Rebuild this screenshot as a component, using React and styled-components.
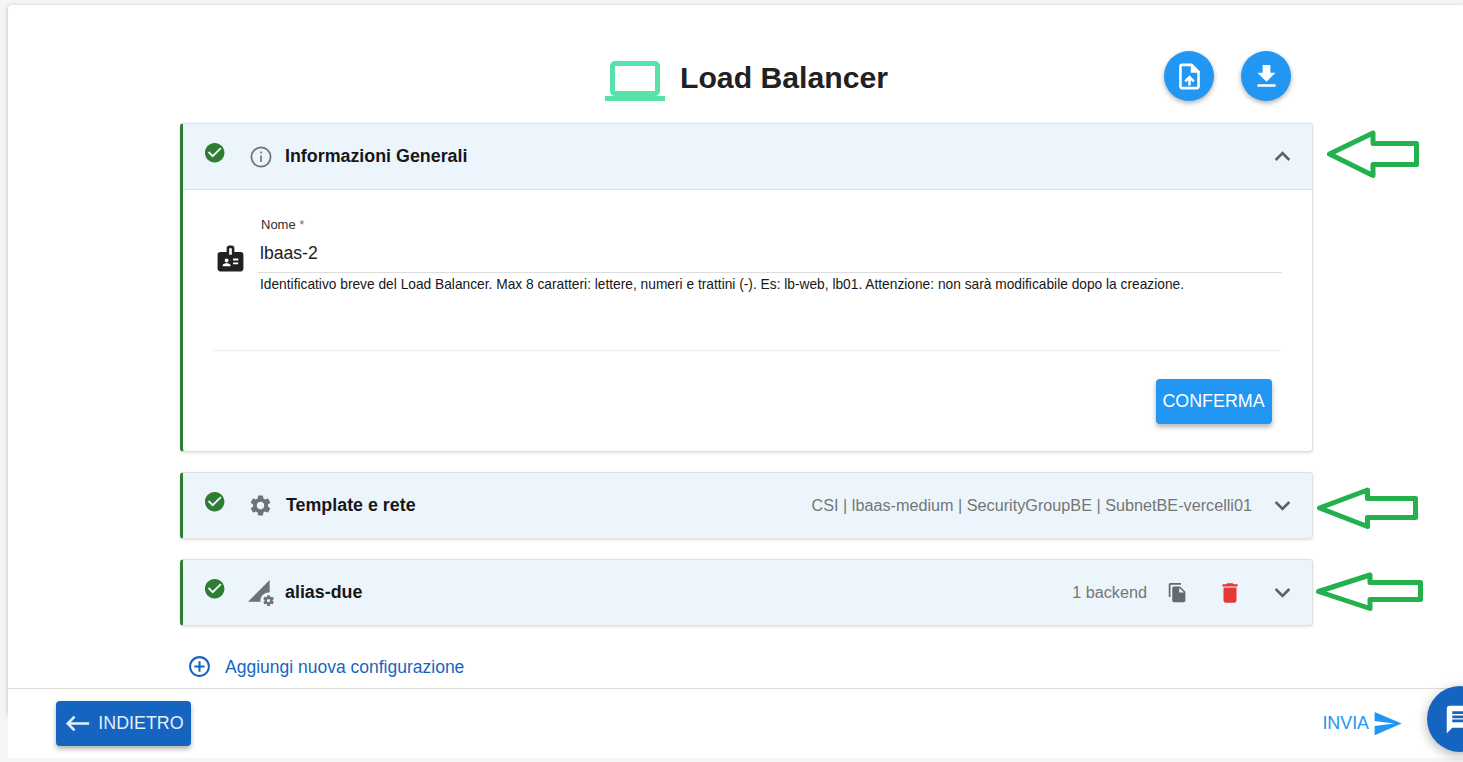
import React from 'react';
import styled, { createGlobalStyle, css } from 'styled-components';
import {
  MdLaptop,
  MdOutlineUploadFile,
  MdFileDownload,
  MdCheckCircle,
  MdExpandLess,
  MdExpandMore,
  MdBadge,
  MdSettings,
  MdPermDataSetting,
  MdFileCopy,
  MdDelete,
  MdAddCircleOutline,
  MdKeyboardBackspace,
  MdSend,
  MdMessage,
} from 'react-icons/md';

const GlobalStyle = createGlobalStyle`
  * {
    box-sizing: border-box;
  }

  body {
    margin: 0;
    background: #f5f5f5;
    color: #212121;
    font-family: "Liberation Sans", Arial, sans-serif;
    overflow: hidden;
  }

  svg {
    display: block;
    flex-shrink: 0;
  }
`;

const Shell = styled.div`
  height: 762px;
  padding: 5px 0 4px 8px;
  display: flex;
  flex-direction: column;
  overflow: hidden;
`;

const Page = styled.main`
  height: 710px;
  flex-shrink: 0;
  margin-bottom: -27px;
  padding: 46px 150px 0 172px;
  background: #fff;
  border-radius: 4px 0 0 4px;
  box-shadow: 0 1px 4px rgba(0, 0, 0, 0.25);
`;

const Header = styled.header`
  height: 72px;
  display: grid;
  grid-template-columns: 1fr auto 1fr;
  align-items: start;
`;

const Title = styled.div`
  grid-column: 2;
  display: flex;
  gap: 15px;
  color: #57e2a9;

  h1 {
    margin: 0;
    color: #212121;
    font-size: 30.2px;
    line-height: 54px;
    white-space: nowrap;
  }
`;

const HeaderActions = styled.div`
  display: flex;
  justify-content: flex-end;
  gap: 27px;
  padding-right: 22px;
`;

const RoundButton = styled.button`
  width: 50px;
  height: 50px;
  padding: 0;
  border: 0;
  border-radius: 50%;
  display: grid;
  place-items: center;
  background: #2196f3;
  color: #fff;
  box-shadow: 0 2px 5px rgba(0, 0, 0, 0.32);
`;

const Panels = styled.div`
  display: flex;
  flex-direction: column;
  gap: 20px;
`;

const Panel = styled.section`
  border: 1px solid #e0e0e0;
  border-left: 3px solid #2e7d32;
  border-radius: 4px;
  background: #fff;
  box-shadow: 0 1px 3px rgba(0, 0, 0, 0.12);
`;

const PanelHead = styled.div`
  height: ${({ $open }) => ($open ? 66 : 65)}px;
  padding: 0 14px 0 20px;
  display: flex;
  align-items: center;
  background: #edf5fc;
  border-radius: 0 3px 3px 0;
  ${({ $open }) => $open && css`
    border-bottom: 1px solid #e0e0e0;
    border-radius: 0 3px 0 0;
  `}
`;

const Status = styled.span`
  width: 46px;
  padding-bottom: 8px;
  color: #2e7d32;
`;

const PanelIcon = styled.span`
  width: 31px;
  margin-right: 5px;
  margin-left: -4px;
  display: flex;
  justify-content: center;
  color: #6f7276;
`;

const PanelTitle = styled.h2`
  margin: 0 auto 0 ${({ $shift }) => $shift || 0}px;
  padding: 0 0 2px 4px;
  color: #171717;
  font-size: 17.85px;
  line-height: 24px;
`;

const Summary = styled.span`
  color: #757575;
  font-size: 16.22px;
  white-space: nowrap;
`;

const RowAction = styled.span`
  margin-left: ${({ $gap }) => $gap}px;
  color: ${({ $color }) => $color || '#66696d'};
`;

const PanelBody = styled.div`
  height: 261px;
  padding: 26px 31px 0 30px;
`;

const Field = styled.label`
  height: 135px;
  display: flex;
  gap: 12px;
  border-bottom: 1px solid #eee;

  > svg {
    margin: 27px 0 0 2px;
  }
`;

const FieldMain = styled.span`
  flex: 1;
  margin-right: -1px;
  display: flex;
  flex-direction: column;
`;

const Label = styled.span`
  padding-left: 3px;
  font-size: 13px;
  line-height: 17px;
  color: #303030;

  i {
    color: #777;
    font-style: normal;
  }
`;

const Input = styled.input`
  height: 40px;
  padding: 1px 2px 0;
  border: 0;
  border-bottom: 1px solid #ddd;
  background: none;
  color: #212121;
  font-family: inherit;
  font-size: 17.6px;
  outline: 0;
`;

const Hint = styled.span`
  padding: 3px 2px 0;
  color: #171717;
  font-size: 13.75px;
  line-height: 18px;
  white-space: nowrap;
`;

const PanelActions = styled.div`
  display: flex;
  justify-content: flex-end;
  padding: 28px 9px 0 0;
`;

const Button = styled.button`
  width: ${({ $width }) => $width}px;
  height: 45px;
  padding: 0 1px 0 0;
  border: 0;
  border-radius: 4px;
  display: flex;
  align-items: center;
  justify-content: center;
  gap: 5px;
  background: ${({ $dark }) => ($dark ? '#1565c0' : '#2196f3')};
  color: ${({ $dark }) => ($dark ? '#e3effa' : '#fff')};
  box-shadow: 0 3px 5px rgba(0, 0, 0, 0.3);
  font-family: inherit;
  font-size: 17.85px;
`;

const AddLink = styled.a`
  margin: 27px 0 0 7px;
  display: flex;
  align-items: center;
  gap: 13px;
  color: #1565c0;
  font-size: 17.5px;
  line-height: 28px;

  svg {
    margin-top: -1px;
  }
`;

const Footer = styled.footer`
  position: relative;
  height: 70px;
  flex-shrink: 0;
  padding: 12px 60px 12px 48px;
  display: flex;
  align-items: flex-start;
  justify-content: space-between;
  border-top: 1px solid #ddd;
  background: #fff;
`;

const SendLink = styled.a`
  height: 45px;
  display: flex;
  align-items: center;
  gap: 3px;
  color: #2196f3;
  font-size: 17.85px;
`;

const ChatButton = styled.button`
  position: fixed;
  left: 1427px;
  top: 686px;
  width: 66px;
  height: 66px;
  padding: 0;
  border: 0;
  border-radius: 50%;
  display: grid;
  place-items: center;
  background: #1565c0;
  color: #fff;
  box-shadow: 0 3px 12px rgba(0, 0, 0, 0.3);
`;

const Annotations = styled.svg`
  position: absolute;
  left: 0;
  top: 0;
  fill: #fff;
  stroke: #22b14c;
  stroke-width: 5;
  stroke-linejoin: round;
  pointer-events: none;
`;

const ARROWS = [
  '1329.5,154 1373,133 1373,143.5 1416.5,143.5 1416.5,164.5 1373,164.5 1373,175.5',
  '1319.5,508 1367.5,490 1367.5,498.5 1415.5,498.5 1415.5,517.5 1367.5,517.5 1367.5,526.5',
  '1318.5,591.5 1370,575 1370,582.5 1420.5,582.5 1420.5,599.5 1370,599.5 1370,608.5',
];

const InfoIcon = () => (
  <svg width="22" height="22" viewBox="0 0 22 22" fill="none" stroke="currentColor">
    <circle cx="11" cy="11" r="9.6" strokeWidth="1.7" />
    <path d="M11 9.5v6.5M11 5.5v2" strokeWidth="1.6" />
  </svg>
);

const PanelHeader = ({ icon, title, shift, open, children }) => (
  <PanelHead $open={open}>
    <Status><MdCheckCircle size={23.4} /></Status>
    <PanelIcon>{icon}</PanelIcon>
    <PanelTitle $shift={shift}>{title}</PanelTitle>
    {children}
    <RowAction $gap={children ? 15 : 0} $color="#616161">
      {open ? <MdExpandLess size={31} /> : <MdExpandMore size={31} />}
    </RowAction>
  </PanelHead>
);

const App = () => (
  <>
    <GlobalStyle />
    <Shell>
      <Page>
        <Header>
          <Title>
            <MdLaptop size={60} />
            <h1>Load Balancer</h1>
          </Title>
          <HeaderActions>
            <RoundButton aria-label="Carica"><MdOutlineUploadFile size={31} /></RoundButton>
            <RoundButton aria-label="Scarica"><MdFileDownload size={31} /></RoundButton>
          </HeaderActions>
        </Header>
        <Panels>
          <Panel>
            <PanelHeader open title="Informazioni Generali" icon={<InfoIcon />} />
            <PanelBody>
              <Field>
                <MdBadge size={31} />
                <FieldMain>
                  <Label>Nome <i>*</i></Label>
                  <Input defaultValue="lbaas-2" />
                  <Hint>
                    Identificativo breve del Load Balancer. Max 8 caratteri: lettere, numeri e trattini (-). Es: lb-web, lb01. Attenzione: non sarà modificabile dopo la creazione.
                  </Hint>
                </FieldMain>
              </Field>
              <PanelActions>
                <Button $width={116}>CONFERMA</Button>
              </PanelActions>
            </PanelBody>
          </Panel>
          <Panel>
            <PanelHeader title="Template e rete" shift={1} icon={<MdSettings size={25} />}>
              <Summary>CSI | lbaas-medium | SecurityGroupBE | SubnetBE-vercelli01</Summary>
            </PanelHeader>
          </Panel>
          <Panel>
            <PanelHeader title="alias-due" icon={<MdPermDataSetting size={26} />}>
              <Summary>1 backend</Summary>
              <RowAction $gap={20}><MdFileCopy size={21} /></RowAction>
              <RowAction $gap={29} $color="#e53935"><MdDelete size={26} /></RowAction>
              <RowAction $gap={9} />
            </PanelHeader>
          </Panel>
        </Panels>
        <AddLink>
          <MdAddCircleOutline size={25} />
          Aggiungi nuova configurazione
        </AddLink>
      </Page>
      <Footer>
        <Button $dark $width={135}>
          <MdKeyboardBackspace size={31} />
          INDIETRO
        </Button>
        <SendLink>
          INVIA
          <MdSend size={31} />
        </SendLink>
      </Footer>
    </Shell>
    <Annotations width="1463" height="762">
      {ARROWS.map((points) => <polygon key={points} points={points} />)}
    </Annotations>
    <ChatButton aria-label="Chat"><MdMessage size={33} /></ChatButton>
  </>
);

export default App;
